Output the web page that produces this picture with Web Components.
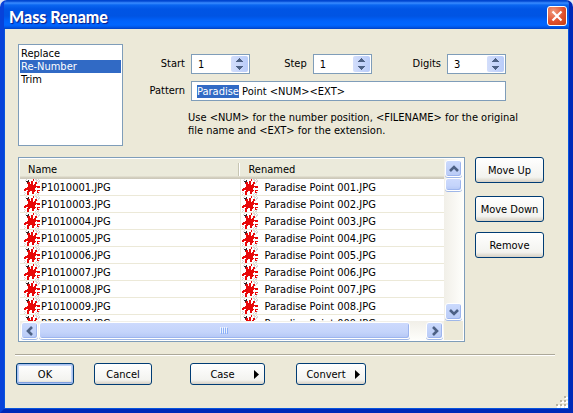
<!DOCTYPE html>
<html lang="en">
<head>
<meta charset="utf-8">
<title>Mass Rename</title>
<style>
  html, body { margin: 0; height: 100%; }
  body {
    background: #dfe6f5;
    color: #000;
    font: 11px/13px "DejaVu Sans Condensed", "DejaVu Sans", sans-serif;
  }
</style>
</head>
<body>

<xp-window heading="Mass Rename">
  <rename-panel>
    <mode-list slot="mode"></mode-list>
    <rename-form slot="form">
      <xp-spinner label="Start" value="1"></xp-spinner>
      <xp-spinner label="Step" value="1"></xp-spinner>
      <xp-spinner label="Digits" value="3"></xp-spinner>
      <xp-textfield label="Pattern" value="Paradise Point &lt;NUM&gt;&lt;EXT&gt;" select-end="8"></xp-textfield>
      <span slot="help">Use &lt;NUM&gt; for the number position, &lt;FILENAME&gt; for the original file name and &lt;EXT&gt; for the extension.</span>
    </rename-form>
    <file-list slot="files"></file-list>
    <xp-button slot="side">Move Up</xp-button>
    <xp-button slot="side" class="spaced">Move Down</xp-button>
    <xp-button slot="side">Remove</xp-button>
    <xp-button slot="actions" default>OK</xp-button>
    <xp-button slot="actions">Cancel</xp-button>
    <xp-button slot="menus" menu class="wide">Case</xp-button>
    <xp-button slot="menus" menu>Convert</xp-button>
  </rename-panel>
</xp-window>

<script>
class XpElement extends HTMLElement {
  connectedCallback() {
    if (this.shadowRoot) return;
    this.attachShadow({ mode: "open" }).innerHTML = this.render();
    this.ready();
  }
  ready() {}
}

customElements.define("xp-window", class extends XpElement {
  render() {
    return `<style>
      :host { display: flex; flex-direction: column; box-sizing: border-box; height: 100vh;
        background: #ece9d8; border-radius: 7px 7px 0 0; overflow: hidden;
        border: solid; border-width: 0 4px 4px;
        border-left-color: #0742da; border-right-color: #0029b8; border-bottom-color: #0029b8;
        box-shadow: inset 1px 0 #0855dd, inset -1px 0 #0855dd, inset 0 -1px #0855dd; }
      header { flex: none; height: 29px; margin: 0 -4px; padding: 0 6px 0 9px; box-sizing: border-box;
        display: flex; align-items: center; justify-content: space-between;
        background: linear-gradient(#0046d0 0, #0046d0 1px, #3a8cff 3px, #0a66f0 5px, #0055e5 9px, #0054e3 16px, #0062fb 21px, #0066ff 25px, #0058ea 27px, #0041c4 29px); }
      h1 { margin: 0; padding-top: 4px; font: 900 16px/22px Lato, "Open Sans", sans-serif; color: #fff; text-shadow: 1px 1px 1px #0a1883; white-space: nowrap; }
      button { width: 20px; height: 20px; margin-top: 3px; padding: 0; border: 1px solid #fff; border-radius: 3px; display: grid; place-items: center;
        background: radial-gradient(circle at 30% 25%, #f09a7c, #e0502e 55%, #c43d10); }
      main { flex: 1; min-height: 0; display: flex; position: relative; }
      .grip { position: absolute; right: 1px; bottom: 1px; }
    </style>
    <header><h1></h1>
      <button type="button" aria-label="Close"><svg width="12" height="12" viewBox="0 0 12 12"><path d="M1.5 1.5 10.5 10.5M10.5 1.5 1.5 10.5" stroke="#fff" stroke-width="2.2"/></svg></button>
    </header>
    <main><slot></slot>
      <svg class="grip" width="12" height="12" viewBox="0 0 12 12" shape-rendering="crispEdges" aria-hidden="true">
        <path fill="#fff" d="M9 1h3v2H9zM5 5h3v2H5zM9 5h3v2H9zM1 9h3v3H1zM5 9h3v3H5zM9 9h3v3H9z"/>
        <path fill="#b8b4a3" d="M8 0h2v2H8zM4 4h2v2H4zM8 4h2v2H8zM0 8h2v2H0zM4 8h2v2H4zM8 8h2v2H8z"/>
      </svg>
    </main>`;
  }
  ready() { this.shadowRoot.querySelector("h1").textContent = this.getAttribute("heading"); }
});

customElements.define("rename-panel", class extends XpElement {
  render() {
    return `<style>
      :host { flex: 1; min-width: 0; display: flex; flex-direction: column; padding: 15px 11px 24px; }
      .top { display: flex; gap: 25px; padding: 0 52px 0 3px; }
      .middle { flex: 1; min-height: 0; display: flex; gap: 10px; margin-top: 11px; padding: 0 14px 0 3px; }
      .side { width: 69px; display: flex; flex-direction: column; gap: 10px; }
      hr { box-sizing: border-box; height: 2px; margin: 12px 3px 7px 0; border: 0; border-top: 1px solid #aca899; border-bottom: 1px solid #fff; }
      footer { display: flex; gap: 38px; padding-left: 1px; }
      .group { display: flex; gap: 20px; }
      .menus { gap: 31px; }
      ::slotted(xp-button[slot=side]) { height: 26px; }
      ::slotted(.spaced) { margin-top: 3px; }
      ::slotted(xp-button[slot=actions]) { width: 58px; height: 22px; }
      ::slotted(xp-button[slot=menus]) { width: 70px; height: 22px; }
      ::slotted(xp-button.wide) { width: 75px; }
    </style>
    <div class="top"><slot name="mode"></slot><slot name="form"></slot></div>
    <div class="middle"><slot name="files"></slot><div class="side"><slot name="side"></slot></div></div>
    <hr>
    <footer><div class="group"><slot name="actions"></slot></div><div class="group menus"><slot name="menus"></slot></div></footer>`;
  }
});

customElements.define("mode-list", class extends XpElement {
  render() {
    return `<style>
      :host { display: block; flex: none; width: 105px; height: 102px; }
      select { appearance: none; display: block; width: 100%; height: 100%; box-sizing: border-box; margin: 0; padding: 2px 1px 1px;
        border: 1px solid #7f9db9; border-radius: 0; background: #fff; font: inherit; color: #000; outline: 0; overflow: hidden; }
      option { min-height: 13px; height: 13px; padding: 0 0 0 1px; line-height: 13px; }
      option:checked { background: linear-gradient(#316ac5, #316ac5); color: #fff; }
    </style>
    <select size="7" aria-label="Rename mode"><option>Replace</option><option selected>Re-Number</option><option>Trim</option></select>`;
  }
});

customElements.define("rename-form", class extends XpElement {
  render() {
    return `<style>
      :host { display: grid; flex: 1; grid-template-columns: 43px 59px 5fr 59px 6fr 59px; grid-auto-rows: 20px; row-gap: 7px; align-content: start; padding-top: 10px; }
      p { grid-column: 1 / -1; margin: 3px -20px 0 40px; }
    </style>
    <slot></slot><p><slot name="help"></slot></p>`;
  }
});

const fieldStyle = `
  :host { display: contents; }
  label { justify-self: end; align-self: center; padding: 0 6px 1px 0; }
  input { flex: 1; min-width: 0; margin: 0; padding: 0 5px; border: 0; background: none; font: inherit; color: #000; outline: 0; }
  input::selection { background: #316ac5; color: #fff; }
  .box { display: flex; box-sizing: border-box; height: 20px; border: 1px solid #7f9db9; background: #fff; }`;

customElements.define("xp-spinner", class extends XpElement {
  render() {
    return `<style>${fieldStyle}
      .box { padding: 1px; }
      .arrows { display: flex; flex-direction: column; width: 17px; border-radius: 2px; overflow: hidden; }
      button { flex: 1; padding: 0; border: 0; display: grid; place-items: center; background: linear-gradient(90deg, #d3defb, #b9ccf9); }
    </style>
    <label for="v">${this.getAttribute("label")}</label>
    <div class="box"><input id="v" inputmode="numeric" value="${this.getAttribute("value")}">
      <div class="arrows">
        <button type="button" aria-label="Increase"><svg width="7" height="4" viewBox="0 0 7 4" shape-rendering="crispEdges"><path fill="#4d6185" d="M3 0h1v1h1v1h1v1h1v1H0V3h1V2h1V1h1z"/></svg></button>
        <button type="button" aria-label="Decrease"><svg width="7" height="4" viewBox="0 0 7 4" shape-rendering="crispEdges"><path fill="#4d6185" d="M0 0h7v1H6v1H5v1H4v1H3V3H2V2H1V1H0z"/></svg></button>
      </div></div>`;
  }
  ready() {
    const input = this.shadowRoot.querySelector("input");
    this.shadowRoot.querySelectorAll("button").forEach((b, i) =>
      b.addEventListener("click", () => { input.value = Math.max(0, Number(input.value) + (i ? -1 : 1)); }));
  }
});

customElements.define("xp-textfield", class extends XpElement {
  render() {
    return `<style>${fieldStyle}
      .box { grid-column: 2 / -1; }
    </style>
    <label for="v">${this.getAttribute("label")}</label>
    <div class="box"><input id="v"></div>`;
  }
  ready() {
    const input = this.shadowRoot.querySelector("input");
    input.value = this.getAttribute("value");
    input.focus();
    input.setSelectionRange(0, Number(this.getAttribute("select-end")));
  }
});

customElements.define("xp-button", class extends XpElement {
  render() {
    return `<style>
      :host { display: flex; flex: none; }
      button { flex: 1; padding: 0; border: 1px solid #003c74; border-radius: 3px; font: inherit; color: #000; white-space: nowrap;
        background: linear-gradient(#fff, #f3f3ef 80%, #e4e1d8 90%, #d6d0c5); }
      :host([default]) button { box-shadow: inset 0 0 0 1px #a9c1f0, inset 0 -2px #7f9fe0, inset 0 0 0 2px #c3d5f7; }
      :host([menu]) button { display: flex; align-items: center; padding-right: 5px; }
      .text { flex: 1; }
    </style>
    <button type="button"><span class="text"><slot></slot></span>${this.hasAttribute("menu")
      ? '<svg width="5" height="9" viewBox="0 0 5 9" aria-hidden="true"><path d="M0 0 5 4.5 0 9z"/></svg>' : ""}</button>`;
  }
});

const splat = [
  "..g......r.gg.g.",
  ".g..k....r..gg.g",
  "..kkk..rr...g.gg",
  "...krr.rr..rr.g.",
  "...rrr.rr..rrg..",
  "....rrrrr.rr....",
  "....rrrrrrrr....",
  "....rrrrrrrrrrrr",
  "...rrrrrrrrr.rrr",
  ".rrrrrrrrrr.....",
  "rrrrrrrrrrr.....",
  "rr..rrrrrrrr.rrr",
  "...rrr..rrr..r..",
  "g..rr...rr...rrg",
  ".g.rr...rr..g.g.",
  "g..rr......g.gg."
];
const splatColors = { r: "#e80808", k: "#3a2224", g: "#d6d6d6" };
const splatSvg = `<svg width="16" height="16" viewBox="0 0 16 16" shape-rendering="crispEdges" aria-hidden="true">` +
  Object.entries(splatColors).map(([key, fill]) => `<path fill="${fill}" d="` +
    splat.map((row, y) => [...row].map((c, x) => c === key ? `M${x} ${y}h1v1h-1z` : "").join("")).join("") + `"/>`).join("") + `</svg>`;

customElements.define("xp-scrollbar", class extends XpElement {
  render() {
    const vertical = this.hasAttribute("vertical");
    const chevrons = vertical ? ["M1 6 5 2 9 6", "M1 2 5 6 9 2"] : ["M6 1 2 5 6 9", "M2 1 6 5 2 9"];
    const size = vertical ? [10, 8] : [8, 10];
    const arrow = i => `<button type="button" aria-label="${["Scroll back", "Scroll forward"][i]}"><svg width="${size[0]}" height="${size[1]}" viewBox="0 0 ${size.join(" ")}"><path d="${chevrons[i]}" fill="none" stroke="#4d6185" stroke-width="2.6"/></svg></button>`;
    return `<style>
      :host { display: flex; padding: 1px; background: linear-gradient(#f1efe8, #fefefb); }
      :host([vertical]) { flex-direction: column; background: linear-gradient(90deg, #f1efe8, #fefefb); }
      button, .thumb { box-sizing: border-box; border: 1px solid #fff; border-radius: 3px; box-shadow: inset -1px -1px #9db5ee, 0 1px #9fb7e8; background: linear-gradient(#cbdafd, #b9cbf6); }
      button { flex: none; width: 17px; height: 17px; padding: 0; display: grid; place-items: center; }
      .thumb { flex: 23; margin-left: 1px; display: grid; place-items: center; background: linear-gradient(#cddafd, #c4d4fb 60%, #b4c7f5); }
      .rest { flex: 1; }
      :host([vertical]) .thumb { flex: 1; margin: 1px 0 0; }
      :host([vertical]) .rest { flex: 10; }
    </style>
    ${arrow(0)}<div class="thumb">${vertical ? "" : '<svg width="8" height="7" viewBox="0 0 8 7" shape-rendering="crispEdges"><path fill="#eef4fe" d="M0 0h1v6H0zM2 0h1v6H2zM4 0h1v6H4zM6 0h1v6H6z"/><path fill="#8cb0f8" d="M1 1h1v6H1zM3 1h1v6H3zM5 1h1v6H5zM7 1h1v6H7z"/></svg>'}</div><div class="rest"></div>${arrow(1)}`;
  }
});

customElements.define("file-list", class extends XpElement {
  render() {
    const sources = [1, 3, 4, 5, 6, 7, 8, 9, 10];
    const rows = sources.map((n, i) => `<tr>
      <td><span>${splatSvg}P101${String(n).padStart(4, "0")}.JPG</span></td>
      <td><span>${splatSvg}Paradise Point ${String(i + 1).padStart(3, "0")}.JPG</span></td></tr>`).join("");
    return `<style>
      :host { flex: 1; min-width: 0; box-sizing: border-box; border: 1px solid #7f9db9; padding: 1px; background: #ece9d8;
        display: grid; grid-template: minmax(0, 1fr) 19px / minmax(0, 1fr) 19px; box-shadow: inset 0 0 0 1px #fff; }
      .view { overflow: hidden; background: #fff; }
      table { width: 100%; table-layout: fixed; border-collapse: separate; border-spacing: 0; }
      th { box-sizing: border-box; height: 20px; padding: 0 8px; font-weight: normal; text-align: left; background: linear-gradient(#ebeadb 0, #ebeadb 17px, #d6d2c2 18px, #cbc7b8 20px); }
      th:first-child { width: 52%; }
      th span { display: block; }
      th:first-child span { border-right: 1px solid #c7c5b2; box-shadow: 1px 0 #fff; margin-right: -7px; }
      td { box-sizing: border-box; height: 17px; padding: 0 0 0 4px; border-bottom: 1px solid #ece9d8; }
      td + td { padding-left: 1px; border-left: 1px solid #ece9d8; }
      td span { display: flex; align-items: center; gap: 1px; height: 16px; white-space: nowrap; }
      td + td span { gap: 6px; }
      svg { flex: none; }
    </style>
    <div class="view"><table>
      <thead><tr><th scope="col"><span>Name</span></th><th scope="col"><span>Renamed</span></th></tr></thead>
      <tbody>${rows}</tbody></table></div>
    <xp-scrollbar vertical></xp-scrollbar>
    <xp-scrollbar></xp-scrollbar>`;
  }
});
</script>
</body>
</html>
